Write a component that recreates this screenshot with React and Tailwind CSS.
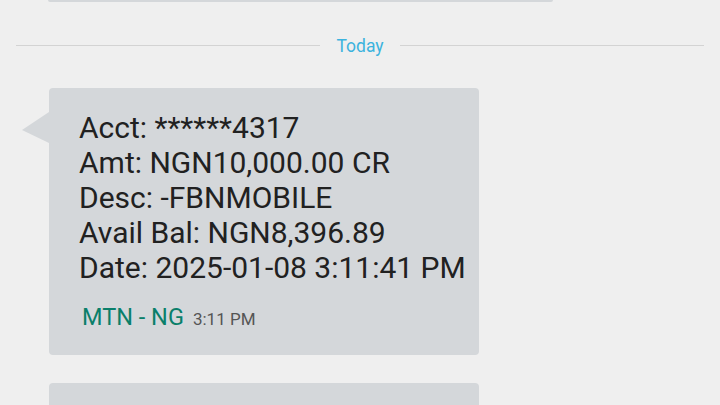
export default function App() {
  const lines = [
    'Acct: ******4317',
    'Amt: NGN10,000.00 CR',
    'Desc: -FBNMOBILE',
    'Avail Bal: NGN8,396.89',
    'Date: 2025-01-08 3:11:41 PM',
  ];

  return (
    <div className="w-[720px] h-[405px] overflow-hidden bg-[#efefef] flex flex-col" style={{ fontFamily: 'Roboto, "Noto Sans", sans-serif' }}>
      {/* tail end of previous message */}
      <div className="ml-[48px] w-[505px] h-[2px] shrink-0 rounded-b-[3px] bg-[#d4d7da]" />

      {/* date divider */}
      <div className="h-[86px] shrink-0 flex items-center px-4">
        <div className="flex-1 h-px bg-[#d3d3d3]" />
        <span className="px-4 pt-[3px] text-[17.5px] leading-none text-[#3cb3de]">Today</span>
        <div className="flex-1 h-px bg-[#d3d3d3]" />
      </div>

      {/* message bubble */}
      <div className="relative ml-[49px] w-[430px] shrink-0 rounded-[4px] bg-[#d4d7da] pt-[22px] pb-[23px] pl-[30px]">
        <svg className="absolute left-[-27px] top-[24px]" width="27" height="31" viewBox="0 0 27 31">
          <polygon points="27,0 0,18 27,31" fill="#d4d7da" />
        </svg>
        <div className="text-[30px] leading-[35px] text-[#212121]">
          {lines.map((l) => (
            <div key={l}>{l}</div>
          ))}
        </div>
        <div className="mt-[19px] ml-[3px] flex items-baseline leading-[26px]">
          <span className="text-[23.5px] text-[#0a7f6a]">MTN - NG</span>
          <span className="ml-[9px] text-[17px] text-[#555]">3:11 PM</span>
        </div>
      </div>

      {/* next message */}
      <div className="mt-[28px] ml-[49px] w-[430px] flex-1 rounded-t-[4px] bg-[#d4d7da]" />
    </div>
  );
}
